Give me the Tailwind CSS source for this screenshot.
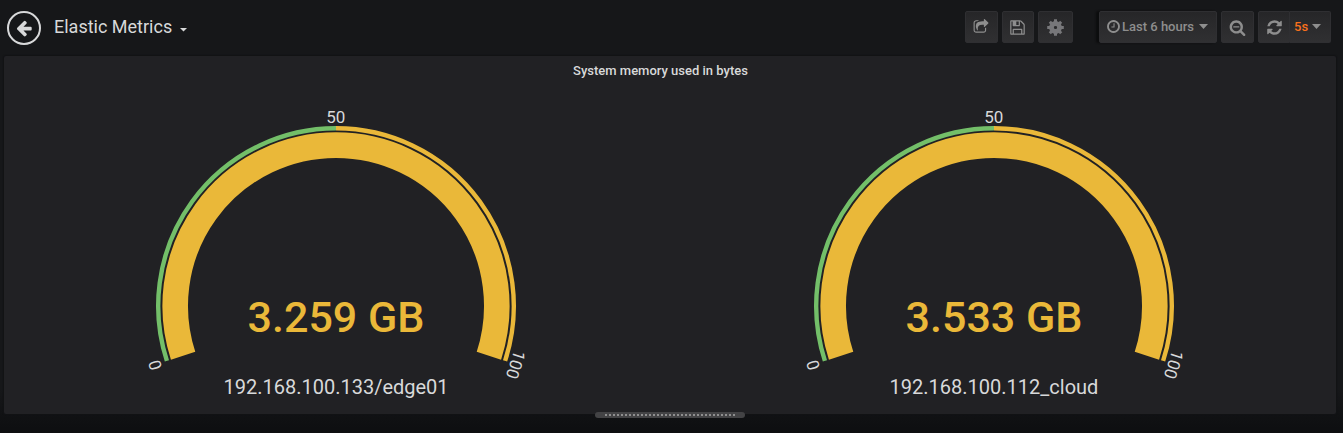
<!DOCTYPE html>
<html lang="en">
<head>
<meta charset="utf-8">
<title>Elastic Metrics</title>
<script src="https://cdn.jsdelivr.net/npm/@tailwindcss/browser@4"></script>
</head>
<body class="h-[433px] w-[1343px] overflow-hidden bg-[#161719] bg-linear-to-b from-[#161719] via-[#161719] via-90% to-[#0d0e10] font-['Roboto',sans-serif] text-[#d8d9da]">
<div class="flex h-full flex-col">
  <header class="flex h-14 shrink-0 items-start pl-[7px] pr-3">
    <button class="mt-[11px] flex size-[34px] items-center justify-center rounded-full border-2 border-[#d8d9da]" aria-label="Back">
      <svg class="mr-px size-[18px]" viewBox="0 0 1792 1792" fill="#d8d9da"><path d="M1664 896v128q0 53-32.5 90.5t-84.5 37.5h-704l293 294q38 36 38 90t-38 90l-75 76q-37 37-90 37-52 0-91-37l-651-652q-37-37-37-90 0-52 37-91l651-650q38-38 91-38 52 0 90 38l75 74q38 38 38 91t-38 91l-293 293h704q52 0 84.5 37.5t32.5 90.5z"/></svg>
    </button>
    <h1 class="ml-[13px] mt-[14px] text-[18px] leading-[26px] whitespace-nowrap">Elastic Metrics</h1>
    <svg class="ml-2 mt-7 h-[3.5px] w-[7px]" viewBox="0 0 7 3.5" fill="#d8d9da"><path d="M0 0h7L3.5 3.5z"/></svg>
    <div class="ml-auto mt-[11px] flex text-[13px] font-medium text-[#8e8e8e]">
      <button class="flex h-8 w-[33px] items-center justify-center rounded-xs border border-[#2f2f32] bg-linear-to-b from-[#262628] to-[#303032]" aria-label="Share">
        <svg class="-mt-px mr-px size-4" viewBox="0 0 1792 1792" fill="currentColor"><path d="M1472 989v259q0 119-84.5 203.5t-203.5 84.5h-832q-119 0-203.5-84.5t-84.5-203.5v-832q0-119 84.5-203.5t203.5-84.5h255q13 0 22.5 9.5t9.5 22.5q0 27-26 32-77 26-133 60-10 4-16 4h-112q-66 0-113 47t-47 113v832q0 66 47 113t113 47h832q66 0 113-47t47-113v-214q0-19 18-29 28-13 54-37 16-16 35-8 21 9 21 29zm237-496l-384 384q-18 19-45 19-12 0-25-5-39-17-39-59v-192h-160q-323 0-438 131-119 137-74 473 3 23-20 34-8 2-12 2-16 0-26-13-10-14-21-31t-39.5-68.5-49.5-99.5-38.5-114-17.5-122q0-49 3.5-91t14-90 28-88 47-81.5 68.5-74 94.5-61.5 124.5-48.5 159.5-30.5 196.5-11h160v-192q0-42 39-59 13-5 25-5 26 0 45 19l384 384q19 19 19 45t-19 45z"/></svg>
      </button>
      <button class="ml-1 flex h-8 w-8 items-center justify-center rounded-xs border border-[#2f2f32] bg-linear-to-b from-[#262628] to-[#303032]" aria-label="Save">
        <svg class="mr-px size-[17px]" viewBox="0 0 1792 1792" fill="currentColor"><path d="M512 1536h768v-384h-768v384zm896 0h128v-896q0-14-10-38.5t-20-34.5l-281-281q-10-10-34-20t-39-10v416q0 40-28 68t-68 28h-576q-40 0-68-28t-28-68v-416h-128v1280h128v-416q0-40 28-68t68-28h832q40 0 68 28t28 68v416zm-384-928v-320q0-13-9.5-22.5t-22.5-9.5h-192q-13 0-22.5 9.5t-9.5 22.5v320q0 13 9.5 22.5t22.5 9.5h192q13 0 22.5-9.5t9.5-22.5zm640 32v928q0 40-28 68t-68 28h-1344q-40 0-68-28t-28-68v-1344q0-40 28-68t68-28h928q40 0 88 20t76 48l280 280q28 28 48 76t20 88z"/></svg>
      </button>
      <button class="ml-1 flex h-8 w-[35px] items-center justify-center rounded-xs border border-[#2f2f32] bg-linear-to-b from-[#262628] to-[#303032]" aria-label="Settings">
        <svg class="mt-px size-[17px]" viewBox="-8.5 -8.5 17 17" fill="none" stroke="#77777a"><circle r="4" stroke-width="4.8"/><path stroke-width="3" d="M0-8.3V-5M0 8.3V5M-8.3 0H-5M8.3 0H5M-5.7-5.7l2 2M5.7 5.7l-2-2M-5.7 5.7l2-2M5.7-5.7l-2 2"/></svg>
      </button>
      <button class="ml-[26px] flex h-8 w-[118px] items-center rounded-xs border border-[#2f2f32] bg-linear-to-b from-[#262628] to-[#303032] pl-[6px] whitespace-nowrap shadow-[-3px_0_2px_#0c0d0e]">
        <svg class="-mt-[2px] size-[15px]" viewBox="0 0 1792 1792" fill="currentColor"><path d="M1024 544v448q0 14-9 23t-23 9h-320q-14 0-23-9t-9-23v-64q0-14 9-23t23-9h224v-352q0-14 9-23t23-9h64q14 0 23 9t9 23zm416 352q0-148-73-273t-198-198-273-73-273 73-198 198-73 273 73 273 198 198 273 73 273-73 198-198 73-273zm224 0q0 209-103 385.5t-279.5 279.5-385.5 103-385.5-103-279.5-279.5-103-385.5 103-385.5 279.5-279.5 385.5-103 385.5 103 279.5 279.5 103 385.5z"/></svg>
        <span class="ml-px">Last 6 hours</span>
        <svg class="-mt-px ml-[5px] h-[5px] w-[9px]" viewBox="0 0 9 5" fill="currentColor"><path d="M0 0h9L4.5 5z"/></svg>
      </button>
      <button class="ml-1 flex h-8 w-[33px] items-center justify-center rounded-xs border border-[#2f2f32] bg-linear-to-b from-[#262628] to-[#303032]" aria-label="Zoom out">
        <svg class="size-[17px]" viewBox="0 0 1792 1792" fill="currentColor"><path d="M1088 800v64q0 13-9.5 22.5t-22.5 9.5h-576q-13 0-22.5-9.5t-9.5-22.5v-64q0-13 9.5-22.5t22.5-9.5h576q13 0 22.5 9.5t9.5 22.5zm128 32q0-185-131.5-316.5t-316.5-131.5-316.5 131.5-131.5 316.5 131.5 316.5 316.5 131.5 316.5-131.5 131.5-316.5zm512 832q0 53-37.5 90.5t-90.5 37.5q-54 0-90-38l-343-342q-179 124-399 124-143 0-273.5-55.5t-225-150-150-225-55.5-273.5 55.5-273.5 150-225 225-150 273.5-55.5 273.5 55.5 225 150 150 225 55.5 273.5q0 220-124 399l343 343q37 37 37 90z"/></svg>
      </button>
      <button class="ml-1 flex h-8 w-8 items-center justify-center rounded-l-xs border border-[#2f2f32] bg-linear-to-b from-[#262628] to-[#303032]" aria-label="Refresh">
        <svg class="size-[17px]" viewBox="0 0 1792 1792" fill="currentColor"><path d="M1639 1056q0 5-1 7-64 268-268 434.5t-478 166.5q-146 0-282.5-55t-243.5-157l-129 129q-19 19-45 19t-45-19-19-45v-448q0-26 19-45t45-19h448q26 0 45 19t19 45-19 45l-137 137q71 66 161 102t187 36q134 0 250-65t186-179q11-17 53-117 8-23 30-23h192q13 0 22.5 9.5t9.5 22.5zm25-800v448q0 26-19 45t-45 19h-448q-26 0-45-19t-19-45 19-45l138-138q-148-137-349-137-134 0-250 65t-186 179q-11 17-53 117-8 23-30 23h-199q-13 0-22.5-9.5t-9.5-22.5v-7q65-268 270-434.5t480-166.5q146 0 284 55.5t245 156.5l130-129q19-19 45-19t45 19 19 45z"/></svg>
      </button>
      <button class="flex h-8 w-[41px] items-center rounded-r-xs border border-l-0 border-[#2f2f32] bg-linear-to-b from-[#262628] to-[#303032] pl-1">
        <span class="text-[#f9701c]">5s</span>
        <svg class="-mt-px ml-[4px] h-[5px] w-[9px]" viewBox="0 0 9 5" fill="currentColor"><path d="M0 0h9L4.5 5z"/></svg>
      </button>
    </div>
  </header>

  <main class="relative ml-1 flex h-[358px] w-[1332px] flex-col rounded-xs bg-[#212124] shadow-[0_0_1px_1px_#121315]">
    <h2 class="h-[30px] pr-[19px] text-center text-[13px] leading-[29px] font-medium">System memory used in bytes</h2>
    <div class="flex pl-[3px]">
      <svg class="h-[328px] w-[658px]" viewBox="7 86 658 328" font-family="Roboto, sans-serif" text-anchor="middle" fill="#d8d9da">
        <g fill="none">
          <path stroke="#73bf69" stroke-width="4.4" d="M166.9 360.9A177.8 177.8 0 0 1 336 128.2"/>
          <path stroke="#eab839" stroke-width="4.4" d="M336 128.2A177.8 177.8 0 0 1 505.1 360.9"/>
          <path stroke="#eab839" stroke-width="25.6" d="M183.1 355.7A160.8 160.8 0 1 1 488.9 355.7"/>
        </g>
        <text x="335.7" y="123" font-size="17">50</text>
        <text transform="translate(160.7 363.3) rotate(-108)" font-size="17">0</text>
        <text transform="translate(510 363) rotate(108)" font-size="17">100</text>
        <text x="336" y="332" font-size="43" font-weight="500" fill="#eab839">3.259 GB</text>
        <text x="336" y="394" font-size="20">192.168.100.133/edge01</text>
      </svg>
      <svg class="h-[328px] w-[658px]" viewBox="7 86 658 328" font-family="Roboto, sans-serif" text-anchor="middle" fill="#d8d9da">
        <g fill="none">
          <path stroke="#73bf69" stroke-width="4.4" d="M166.9 360.9A177.8 177.8 0 0 1 336 128.2"/>
          <path stroke="#eab839" stroke-width="4.4" d="M336 128.2A177.8 177.8 0 0 1 505.1 360.9"/>
          <path stroke="#eab839" stroke-width="25.6" d="M183.1 355.7A160.8 160.8 0 1 1 488.9 355.7"/>
        </g>
        <text x="335.7" y="123" font-size="17">50</text>
        <text transform="translate(160.7 363.3) rotate(-108)" font-size="17">0</text>
        <text transform="translate(510 363) rotate(108)" font-size="17">100</text>
        <text x="336" y="332" font-size="43" font-weight="500" fill="#eab839">3.533 GB</text>
        <text x="336" y="394" font-size="20">192.168.100.112_cloud</text>
      </svg>
    </div>
    <div class="absolute left-[591px] top-[356px] flex h-[6px] w-[150px] items-center justify-center rounded-full bg-[#434345]">
      <div class="w-[130px] border-t-2 border-dotted border-[#8e8e8e]"></div>
    </div>
  </main>
</div>
</body>
</html>
